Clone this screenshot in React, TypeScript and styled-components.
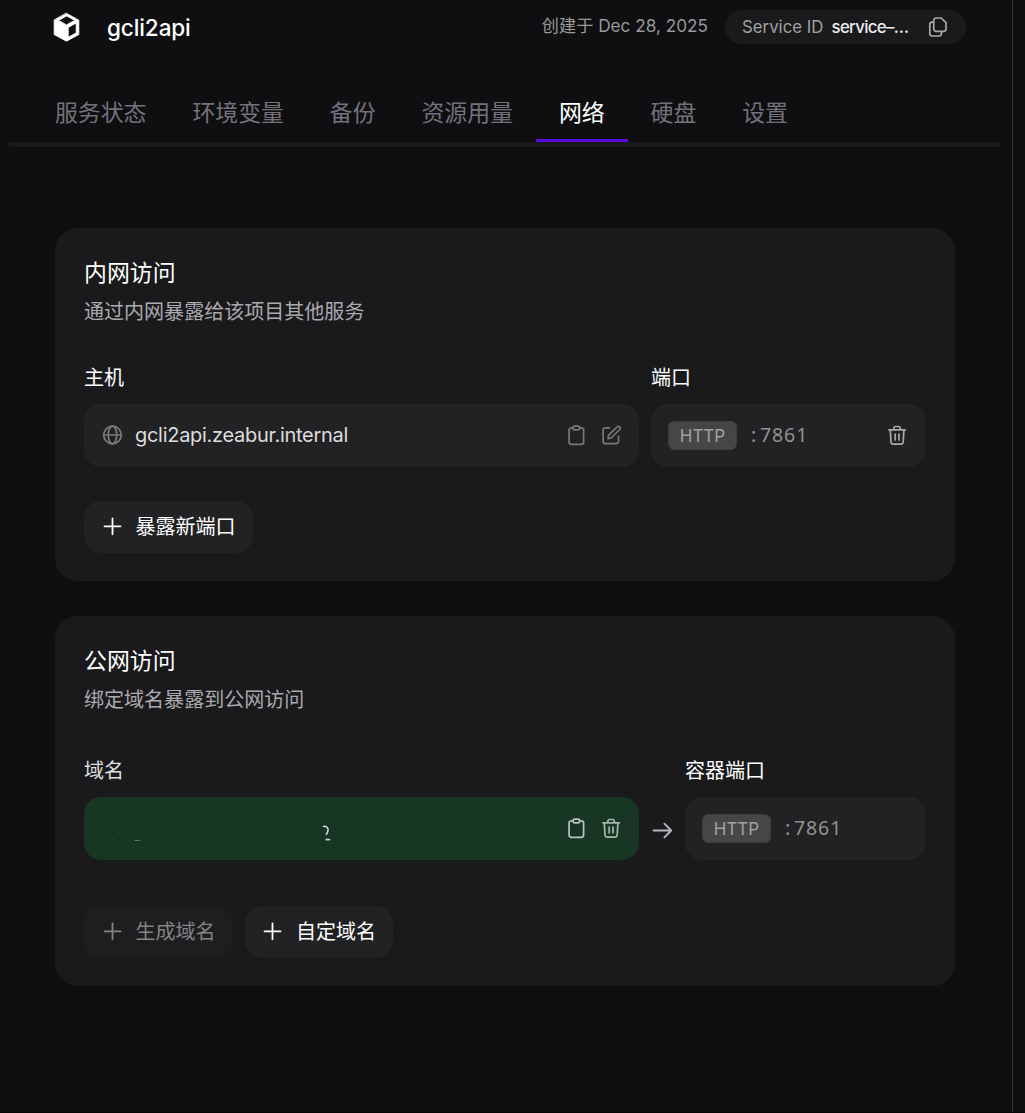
import React from "react";
import styled, { createGlobalStyle } from "styled-components";

const GlobalStyle = createGlobalStyle`
  *, *::before, *::after { box-sizing: border-box; }
  html, body { margin: 0; background: #0f0f11; }
  body {
    font-family: Inter, "Noto Sans CJK SC", sans-serif;
    color: #fff;
    overflow: hidden;
  }
  button { font: inherit; color: inherit; border: 0; background: none; padding: 0; }
`;

const Screen = styled.div`
  display: flex;
  width: 1025px;
  height: 1113px;
  background: #0f0f11;
  border-bottom: 1px solid #050305;
`;

const Pane = styled.main`
  display: flex;
  flex-direction: column;
  width: 1013px;
  border-right: 1px solid #343437;
`;

const Header = styled.header`
  display: flex;
  align-items: center;
  height: 54px;
  padding: 0 46px 0 53px;
`;

const ServiceName = styled.h1`
  flex: 1;
  margin: 1px 0 0 27px;
  font-size: 22.5px;
  font-weight: 450;
  line-height: 30px;
  letter-spacing: -0.1px;
`;

const Created = styled.span`
  font-size: 17.2px;
  line-height: 24px;
  color: #98989a;
  white-space: nowrap;
  margin: -2px 17px 0 0;
`;

const IdPill = styled.div`
  display: flex;
  align-items: center;
  width: 241px;
  height: 34px;
  padding: 0 18px 0 17px;
  border-radius: 17px;
  background: #1a1a1c;
  font-size: 16.8px;
  line-height: 24px;
  white-space: nowrap;
`;

const IdLabel = styled.span`
  width: 89.5px;
  margin-top: -1px;
  color: #a0a0a2;
`;

const IdValue = styled.span`
  flex: 1;
  margin-top: -1px;
  color: #ececec;
  font-weight: 500;
  letter-spacing: -0.65px;
`;

const Tabs = styled.nav`
  display: flex;
  height: 93px;
  margin: 0 12px 0 9px;
  padding: 29px 0 0 23px;
  border-bottom: 5px solid #1a1a1c;
`;

const Tab = styled.button<{ $active?: boolean }>`
  height: 59px;
  padding: 4px 22.95px 0;
  border-bottom: 3px solid ${(p) => (p.$active ? "#5b0cdc" : "transparent")};
  color: ${(p) => (p.$active ? "#fff" : "#74717b")};
  font-size: 22.9px;
  font-weight: 400;
  line-height: 52px;
  white-space: nowrap;
`;

const Content = styled.div`
  display: flex;
  flex-direction: column;
  gap: 35px;
  padding: 81px 57.5px 0 55px;
`;

const Card = styled.section<{ $height: number }>`
  height: ${(p) => p.$height}px;
  padding: 28px 28.5px 28px 29px;
  border-radius: 23px;
  background: #1a1a1c;
`;

const Title = styled.h2`
  margin: 0;
  font-size: 22.9px;
  font-weight: 400;
  line-height: 34px;
`;

const Subtitle = styled.p`
  margin: 7px 0 0;
  color: #aaa9ae;
  font-size: 20.05px;
  line-height: 30px;
`;

const Fields = styled.div<{ $top: number; $columns: string }>`
  display: grid;
  grid-template-columns: ${(p) => p.$columns};
  margin-top: ${(p) => p.$top}px;
`;

const Field = styled.div`
  display: flex;
  flex-direction: column;
  gap: 11px;
`;

const Label = styled.span<{ $soft?: boolean }>`
  height: 30px;
  color: ${(p) => (p.$soft ? "#dededf" : "#fff")};
  font-size: 20px;
  font-weight: 400;
  line-height: 30px;
`;

const Box = styled.div<{ $green?: boolean }>`
  display: flex;
  align-items: center;
  height: 63px;
  padding: 0 17px;
  border-radius: 17px;
  background: ${(p) => (p.$green ? "#173624" : "#222224")};
`;

const Host = styled.span`
  flex: 1;
  margin: -2px 0 0 11px;
  color: #dcdcdd;
  font-size: 20px;
  line-height: 28px;
  letter-spacing: -0.29px;
`;

const Actions = styled.div`
  display: flex;
  gap: 12px;
  margin-right: -1px;
`;

const Badge = styled.span`
  width: 69px;
  height: 29px;
  border: 1px solid #3d3d3f;
  border-radius: 6px;
  background: #464648;
  color: #a1a1a2;
  font-size: 17px;
  line-height: 28px;
  text-align: center;
`;

const Port = styled.span`
  flex: 1;
  margin: -2px 0 0 11px;
  color: #919193;
  font-family: "Noto Sans", sans-serif;
  font-size: 19.5px;
  line-height: 28px;
  letter-spacing: 0.9px;
`;

const Colon = styled.span`
  display: inline-block;
  width: 12px;
  text-align: center;
`;

const ArrowCell = styled.div`
  display: flex;
  justify-content: center;
  padding-top: 63px;
`;

const Buttons = styled.div<{ $top: number }>`
  display: flex;
  gap: 12px;
  margin-top: ${(p) => p.$top}px;
`;

const AddButton = styled.button<{ $muted?: boolean }>`
  display: flex;
  align-items: center;
  gap: 12px;
  height: 51.5px;
  padding: 0 17px 0 16.5px;
  border-radius: 17px;
  background: ${(p) => (p.$muted ? "#1e1e20" : "#222224")};
  color: ${(p) => (p.$muted ? "#838384" : "#fff")};
  font-size: 20px;
  line-height: 30px;
  white-space: nowrap;
`;

const Spacer = styled.span`
  flex: 1;
`;

const Icon = styled.svg`
  display: block;
  flex: none;
  fill: none;
  stroke: currentColor;
  stroke-linecap: round;
  stroke-linejoin: round;
`;

const Cube = () => (
  <Icon width="27" height="30" viewBox="0 0 27 30">
    <path
      d="M13.5 1.4 25.8 8.2V22.5L13.5 29.2 1.2 22.5V8.2Z M13.5 4 5.4 8.4 13.5 12.9 21.6 8.4Z M15.2 15.7V25.3L23.2 20.9V11.2Z"
      fill="#fff"
      fillRule="evenodd"
      stroke="#fff"
      strokeWidth="0.9"
    />
  </Icon>
);

const CopyPages = () => (
  <Icon width="20" height="20" viewBox="0 0 20 20" color="#a9a9aa" strokeWidth="1.7">
    <path d="M8.2 1h4.9L18 5.6v6.2a2.5 2.5 0 0 1-2.5 2.5H8.2a2.5 2.5 0 0 1-2.5-2.5V3.5A2.5 2.5 0 0 1 8.2 1Z" />
    <path d="M5.4 5.2H4.2A2.4 2.4 0 0 0 1.8 7.6v9a2.4 2.4 0 0 0 2.4 2.4h6.9a2.4 2.4 0 0 0 2.4-2.4v-2" />
  </Icon>
);

const Globe = () => (
  <Icon width="23" height="23" viewBox="0 0 23 23" color="#7b7b7d" strokeWidth="1.7">
    <circle cx="11.5" cy="11" r="8.8" />
    <ellipse cx="11.5" cy="11" rx="4.2" ry="8.8" />
    <path d="M2.5 11h18" />
  </Icon>
);

const Clipboard = ({ color }: { color: string }) => (
  <Icon width="23" height="23" viewBox="0 0 23 23" color={color} strokeWidth="1.7">
    <path d="M8 3.8H6.4A2.3 2.3 0 0 0 4.1 6.1v12a2.3 2.3 0 0 0 2.3 2.3h9.9a2.3 2.3 0 0 0 2.3-2.3v-12a2.3 2.3 0 0 0-2.3-2.3h-1.6" />
    <rect x="8" y="2.1" width="6.7" height="3.8" rx="1.9" />
  </Icon>
);

const Edit = ({ color }: { color: string }) => (
  <Icon width="23" height="23" viewBox="0 0 23 23" color={color} strokeWidth="1.7">
    <path d="M9.7 3.8H5.4a2.3 2.3 0 0 0-2.3 2.3v11.2a2.3 2.3 0 0 0 2.3 2.3h10.8a2.3 2.3 0 0 0 2.3-2.3v-5" />
    <path d="m8.1 14.7.4-3.3 8.6-8.5a1.8 1.8 0 0 1 2.6 0 1.8 1.8 0 0 1 0 2.6L11.2 14Z" />
  </Icon>
);

const Trash = ({ color }: { color: string }) => (
  <Icon width="23" height="23" viewBox="0 0 23 23" color={color} strokeWidth="1.7">
    <path d="M2.9 5.8h16.4M7.6 5.6l.5-2.2a1.2 1.2 0 0 1 1.1-.9H13a1.2 1.2 0 0 1 1.1.9l.5 2.2M4.3 6l.7 12a2.4 2.4 0 0 0 2.4 2.2h7.4a2.4 2.4 0 0 0 2.4-2.2l.7-12M9.2 10v6M13 10v6" />
  </Icon>
);

const Plus = () => (
  <Icon width="23" height="23" viewBox="0 0 23 23" strokeWidth="1.8">
    <path d="M11.5 3.3v16M3.5 11.3h16" />
  </Icon>
);

const Arrow = () => (
  <Icon width="21" height="21" viewBox="0 0 21 21" color="#b9b5be" strokeWidth="1.9">
    <path d="M1.5 11.5h17.6M12.4 4.7l6.8 6.8-6.8 6.8" />
  </Icon>
);

const DomainMarks = () => (
  <Icon width="230" height="28" viewBox="0 0 230 28">
    <path d="M10 23.6h3" stroke="#28513a" strokeWidth="0.8" />
    <path d="M34 25.4h5" stroke="#77917d" strokeWidth="0.8" />
    <path d="M222.5 11.4c3-.3 4.6 1 4.6 3.4 0 2.2-1 3.4-1.8 4.6" stroke="#d4ddd7" strokeWidth="1.5" />
    <path d="M225.2 24.6h3.4" stroke="#c8d2cc" strokeWidth="1.6" />
  </Icon>
);

const tabs = ["服务状态", "环境变量", "备份", "资源用量", "网络", "硬盘", "设置"];

export default function App() {
  return (
    <>
      <GlobalStyle />
      <Screen>
        <Pane>
          <Header>
            <Cube />
            <ServiceName>gcli2api</ServiceName>
            <Created>创建于 Dec 28, 2025</Created>
            <IdPill>
              <IdLabel>Service ID</IdLabel>
              <IdValue>service–…</IdValue>
              <CopyPages />
            </IdPill>
          </Header>
          <Tabs>
            {tabs.map((name) => (
              <Tab key={name} $active={name === "网络"}>
                {name}
              </Tab>
            ))}
          </Tabs>
          <Content>
            <Card $height={353}>
              <Title>内网访问</Title>
              <Subtitle>通过内网暴露给该项目其他服务</Subtitle>
              <Fields $top={36} $columns="555px 12px 275px">
                <Field>
                  <Label>主机</Label>
                  <Box>
                    <Globe />
                    <Host>gcli2api.zeabur.internal</Host>
                    <Actions>
                      <Clipboard color="#78787a" />
                      <Edit color="#78787a" />
                    </Actions>
                  </Box>
                </Field>
                <span />
                <Field>
                  <Label>端口</Label>
                  <Box>
                    <Badge>HTTP</Badge>
                    <Port>
                      <Colon>:</Colon>7861
                    </Port>
                    <Trash color="#a8a8a9" />
                  </Box>
                </Field>
              </Fields>
              <Buttons $top={34}>
                <AddButton>
                  <Plus />
                  暴露新端口
                </AddButton>
              </Buttons>
            </Card>
            <Card $height={370}>
              <Title>公网访问</Title>
              <Subtitle>绑定域名暴露到公网访问</Subtitle>
              <Fields $top={41} $columns="555px 46px 241px">
                <Field>
                  <Label $soft>域名</Label>
                  <Box $green>
                    <DomainMarks />
                    <Spacer />
                    <Actions>
                      <Clipboard color="#bac3be" />
                      <Trash color="#a5b6aa" />
                    </Actions>
                  </Box>
                </Field>
                <ArrowCell>
                  <Arrow />
                </ArrowCell>
                <Field>
                  <Label>容器端口</Label>
                  <Box>
                    <Badge>HTTP</Badge>
                    <Port>
                      <Colon>:</Colon>7861
                    </Port>
                  </Box>
                </Field>
              </Fields>
              <Buttons $top={46}>
                <AddButton $muted>
                  <Plus />
                  生成域名
                </AddButton>
                <AddButton>
                  <Plus />
                  自定域名
                </AddButton>
              </Buttons>
            </Card>
          </Content>
        </Pane>
      </Screen>
    </>
  );
}
